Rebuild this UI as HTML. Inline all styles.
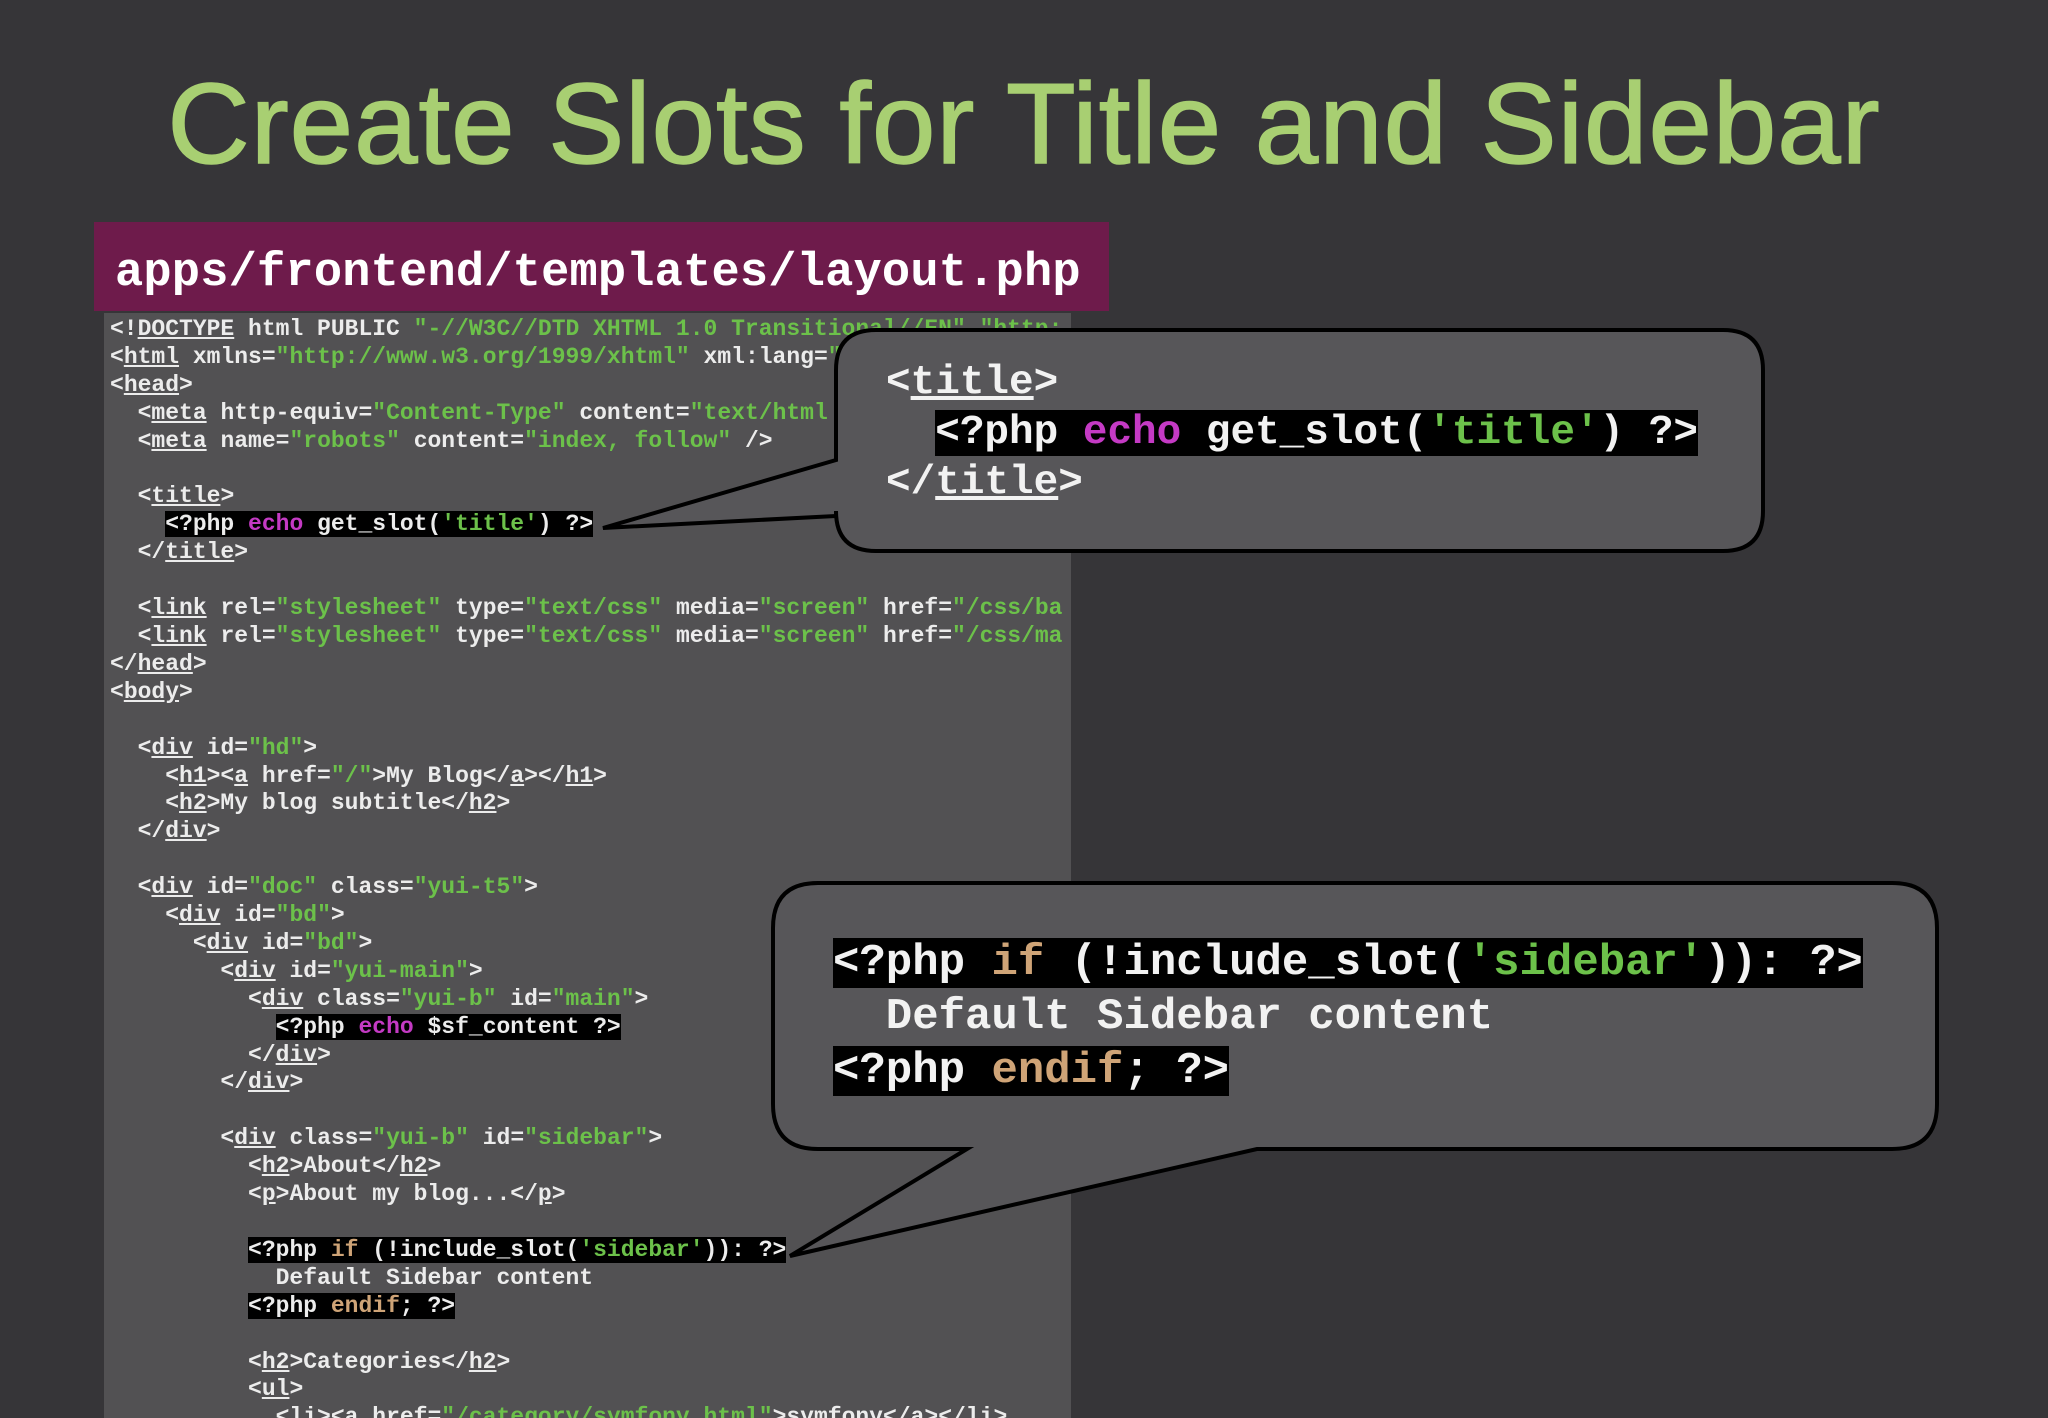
<!DOCTYPE html>
<html><head><meta charset="utf-8"><style>
body{margin:0;width:2048px;height:1418px;background:#363538;overflow:hidden;position:relative;font-family:"Liberation Sans",sans-serif}
h1{position:absolute;left:0;width:2048px;top:60px;margin:0;text-align:center;font-weight:normal;font-size:114px;color:#a8cf72;letter-spacing:1px;line-height:130px;-webkit-text-stroke:1.5px #a8cf72}
.hdr{position:absolute;left:94px;top:222px;width:1015px;height:89px;background:#6e1b4b}
.hdr span{position:absolute;left:21px;top:24px;font:bold 47px/56px "Liberation Mono",monospace;color:#fff;letter-spacing:0.2px}
.panel{position:absolute;left:104px;top:313px;width:967px;height:1105px;background:#525153;overflow:hidden}
pre{margin:0;font:bold 23px/27.9px "Liberation Mono",monospace;color:#ececec;position:absolute;left:6px;top:3px;white-space:pre}
.g{color:#6cc14a}.m{color:#c43ac4}.t{color:#cfa477}
u{text-decoration:underline}
.h{background:#000}
svg{position:absolute;left:0;top:0}
.b{position:absolute;font-weight:bold;font-family:"Liberation Mono",monospace;color:#f2f2f2;white-space:pre}
</style></head><body>
<h1>Create Slots for Title and Sidebar</h1>
<div class="hdr"><span>apps/frontend/templates/layout.php</span></div>
<div class="panel"><pre>&lt;!<u>DOCTYPE</u> html PUBLIC <span class="g">"-//W3C//DTD XHTML 1.0 Transitional//EN" "http:</span>
&lt;<u>html</u> xmlns=<span class="g">"http://www.w3.org/1999/xhtml"</span> xml:lang=<span class="g">"en"</span>
&lt;<u>head</u>&gt;
  &lt;<u>meta</u> http-equiv=<span class="g">"Content-Type"</span> content=<span class="g">"text/html</span>
  &lt;<u>meta</u> name=<span class="g">"robots"</span> content=<span class="g">"index, follow"</span> /&gt;

  &lt;<u>title</u>&gt;
    <span class="h">&lt;?php <span class="m">echo</span> get_slot(<span class="g">'title'</span>) ?&gt;</span>
  &lt;/<u>title</u>&gt;

  &lt;<u>link</u> rel=<span class="g">"stylesheet"</span> type=<span class="g">"text/css"</span> media=<span class="g">"screen"</span> href=<span class="g">"/css/ba</span>
  &lt;<u>link</u> rel=<span class="g">"stylesheet"</span> type=<span class="g">"text/css"</span> media=<span class="g">"screen"</span> href=<span class="g">"/css/ma</span>
&lt;/<u>head</u>&gt;
&lt;<u>body</u>&gt;

  &lt;<u>div</u> id=<span class="g">"hd"</span>&gt;
    &lt;<u>h1</u>&gt;&lt;<u>a</u> href=<span class="g">"/"</span>&gt;My Blog&lt;/<u>a</u>&gt;&lt;/<u>h1</u>&gt;
    &lt;<u>h2</u>&gt;My blog subtitle&lt;/<u>h2</u>&gt;
  &lt;/<u>div</u>&gt;

  &lt;<u>div</u> id=<span class="g">"doc"</span> class=<span class="g">"yui-t5"</span>&gt;
    &lt;<u>div</u> id=<span class="g">"bd"</span>&gt;
      &lt;<u>div</u> id=<span class="g">"bd"</span>&gt;
        &lt;<u>div</u> id=<span class="g">"yui-main"</span>&gt;
          &lt;<u>div</u> class=<span class="g">"yui-b"</span> id=<span class="g">"main"</span>&gt;
            <span class="h">&lt;?php <span class="m">echo</span> $sf_content ?&gt;</span>
          &lt;/<u>div</u>&gt;
        &lt;/<u>div</u>&gt;

        &lt;<u>div</u> class=<span class="g">"yui-b"</span> id=<span class="g">"sidebar"</span>&gt;
          &lt;<u>h2</u>&gt;About&lt;/<u>h2</u>&gt;
          &lt;<u>p</u>&gt;About my blog...&lt;/<u>p</u>&gt;

          <span class="h">&lt;?php <span class="t">if</span> (!include_slot(<span class="g">'sidebar'</span>)): ?&gt;</span>
            Default Sidebar content
          <span class="h">&lt;?php <span class="t">endif</span>; ?&gt;</span>

          &lt;<u>h2</u>&gt;Categories&lt;/<u>h2</u>&gt;
          &lt;<u>ul</u>&gt;
            &lt;<u>li</u>&gt;&lt;<u>a</u> href=<span class="g">"/category/symfony.html"</span>&gt;symfony&lt;/<u>a</u>&gt;&lt;/<u>li</u>&gt;</pre></div>
<svg width="2048" height="1418">
<path d="M876,330 H1723 Q1763,330 1763,370 V511 Q1763,551 1723,551 H876 Q836,551 836,511 V516 L603,528 L836,460 V370 Q836,330 876,330 Z" fill="#575659" stroke="#000" stroke-width="4"/>
<path d="M818,883 H1892 Q1937,883 1937,928 V1104 Q1937,1149 1892,1149 H1257 L790,1256 L967,1149 H818 Q773,1149 773,1104 V928 Q773,883 818,883 Z" fill="#575659" stroke="#000" stroke-width="4"/>
</svg>
<div class="b" style="left:886px;top:358px;font-size:41px;line-height:50px">&lt;<u>title</u>&gt;
  <span class="h">&lt;?php <span class="m">echo</span> get_slot(<span class="g">'title'</span>) ?&gt;</span>
&lt;/<u>title</u>&gt;</div>
<div class="b" style="left:833px;top:936px;font-size:44px;line-height:54px"><span class="h">&lt;?php <span class="t">if</span> (!include_slot(<span class="g">'sidebar'</span>)): ?&gt;</span>
  Default Sidebar content
<span class="h">&lt;?php <span class="t">endif</span>; ?&gt;</span></div>
</body></html>
